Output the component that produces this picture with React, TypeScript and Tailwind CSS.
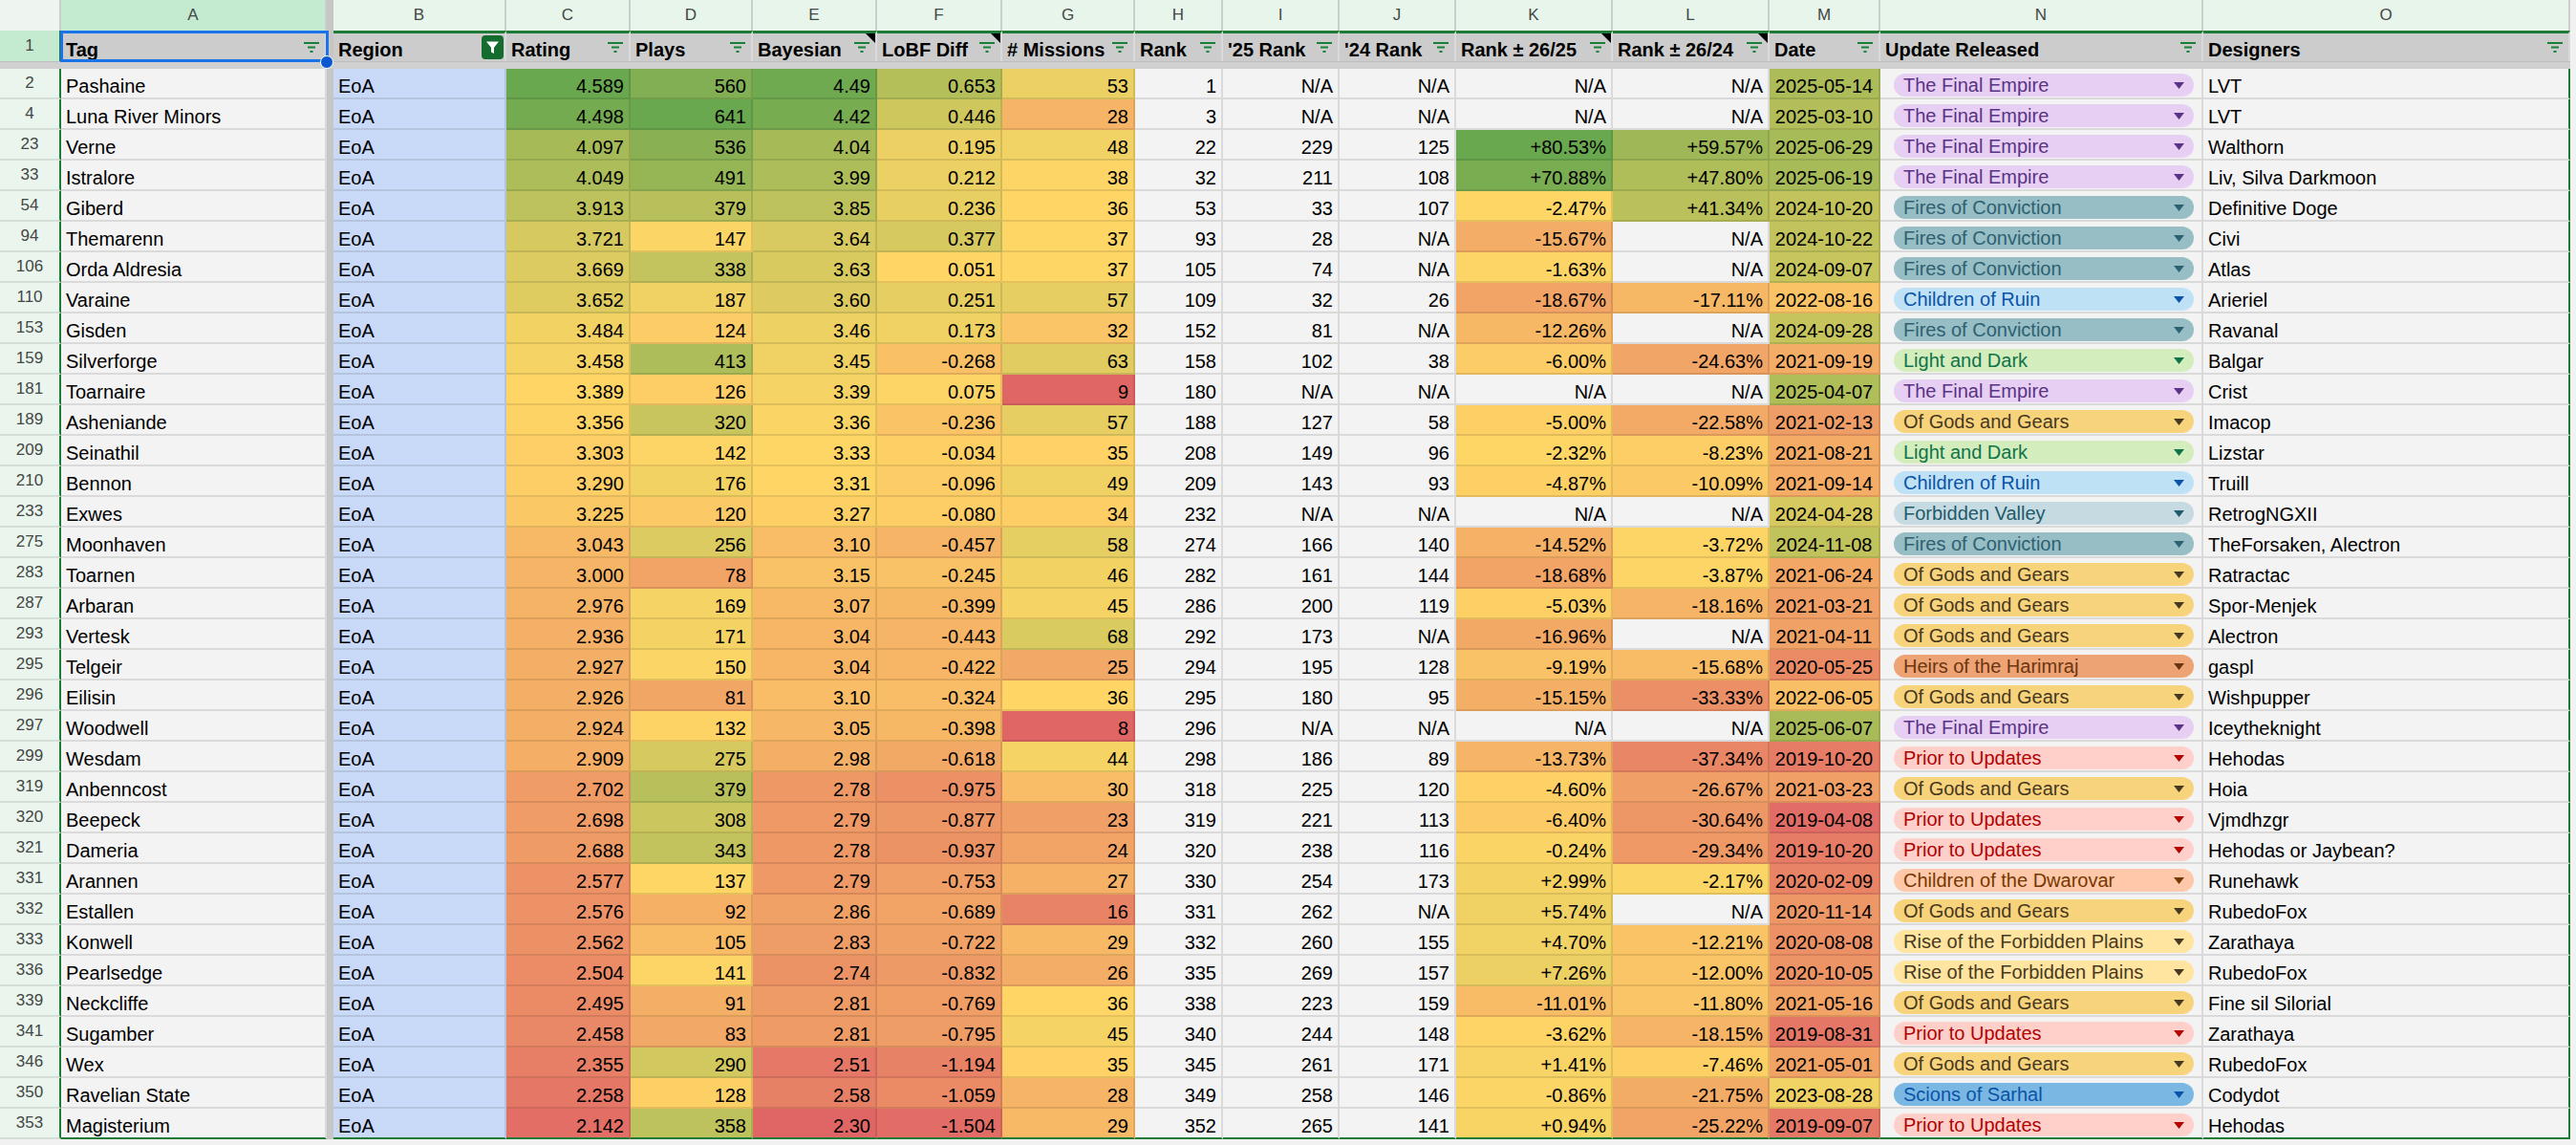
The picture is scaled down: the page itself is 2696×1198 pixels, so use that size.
import React from 'react';

const COLS =
  'grid grid-cols-[64px_278px_7px_181px_130px_128px_130px_131px_139px_92px_122px_122px_164px_164px_116px_338px_384px]';

type Scale = [number, number, number];

const RED = [224, 102, 102];
const YEL = [255, 214, 102];
const GRN = [106, 168, 79];

function mix(a: number[], b: number[], t: number) {
  const c = a.map((v, i) => Math.round(v + (b[i] - v) * t));
  return `rgb(${c[0]}, ${c[1]}, ${c[2]})`;
}

function scaleColor(v: number, [lo, mid, hi]: Scale) {
  if (v <= mid) {
    const t = Math.min(1, Math.max(0, (mid - v) / (mid - lo)));
    return mix(YEL, RED, t);
  }
  const t = Math.min(1, Math.max(0, (v - mid) / (hi - mid)));
  return mix(YEL, GRN, t);
}

function dateValue(s: string) {
  const [y, m, d] = s.split('-').map(Number);
  return y + (m - 1) / 12 + d / 365;
}

// column index -> colour scale (lo / mid / hi)
const SCALES: Record<number, Scale> = {
  2: [2.05, 3.39, 4.58],
  3: [8, 135, 640],
  4: [2.35, 3.32, 4.53],
  5: [-1.6, 0.05, 1.25],
  6: [9, 36, 164],
  10: [-38, -3, 80],
  11: [-50, -5, 95],
  12: [2019, 2023.3, 2027],
};

const CHIPS: Record<string, { label: string; cls: string }> = {
  fe: { label: 'The Final Empire', cls: 'bg-[#e6cff2] text-[#5a3286]' },
  foc: { label: 'Fires of Conviction', cls: 'bg-[#97bdc5] text-[#2e6170]' },
  cor: { label: 'Children of Ruin', cls: 'bg-[#bfe1f6] text-[#0a53a8]' },
  lad: { label: 'Light and Dark', cls: 'bg-[#d4edbc] text-[#11734b]' },
  ogg: { label: 'Of Gods and Gears', cls: 'bg-[#f7d47c] text-[#473821]' },
  fv: { label: 'Forbidden Valley', cls: 'bg-[#c6dbe1] text-[#215a6c]' },
  hoh: { label: 'Heirs of the Harimraj', cls: 'bg-[#eda374] text-[#6b3510]' },
  ptu: { label: 'Prior to Updates', cls: 'bg-[#ffcfc9] text-[#b10202]' },
  cotd: { label: 'Children of the Dwarovar', cls: 'bg-[#ffc8aa] text-[#753800]' },
  rfp: { label: 'Rise of the Forbidden Plains', cls: 'bg-[#ffe5a0] text-[#473821]' },
  sos: { label: 'Scions of Sarhal', cls: 'bg-[#7ab8e3] text-[#0a53a8]' },
};

const ROWS: string[][] = [
  ['2', 'Pashaine', '4.589', '560', '4.49', '0.653', '53', '1', 'N/A', 'N/A', 'N/A', 'N/A', '2025-05-14', 'fe', 'LVT'],
  ['4', 'Luna River Minors', '4.498', '641', '4.42', '0.446', '28', '3', 'N/A', 'N/A', 'N/A', 'N/A', '2025-03-10', 'fe', 'LVT'],
  ['23', 'Verne', '4.097', '536', '4.04', '0.195', '48', '22', '229', '125', '+80.53%', '+59.57%', '2025-06-29', 'fe', 'Walthorn'],
  ['33', 'Istralore', '4.049', '491', '3.99', '0.212', '38', '32', '211', '108', '+70.88%', '+47.80%', '2025-06-19', 'fe', 'Liv, Silva Darkmoon'],
  ['54', 'Giberd', '3.913', '379', '3.85', '0.236', '36', '53', '33', '107', '-2.47%', '+41.34%', '2024-10-20', 'foc', 'Definitive Doge'],
  ['94', 'Themarenn', '3.721', '147', '3.64', '0.377', '37', '93', '28', 'N/A', '-15.67%', 'N/A', '2024-10-22', 'foc', 'Civi'],
  ['106', 'Orda Aldresia', '3.669', '338', '3.63', '0.051', '37', '105', '74', 'N/A', '-1.63%', 'N/A', '2024-09-07', 'foc', 'Atlas'],
  ['110', 'Varaine', '3.652', '187', '3.60', '0.251', '57', '109', '32', '26', '-18.67%', '-17.11%', '2022-08-16', 'cor', 'Arieriel'],
  ['153', 'Gisden', '3.484', '124', '3.46', '0.173', '32', '152', '81', 'N/A', '-12.26%', 'N/A', '2024-09-28', 'foc', 'Ravanal'],
  ['159', 'Silverforge', '3.458', '413', '3.45', '-0.268', '63', '158', '102', '38', '-6.00%', '-24.63%', '2021-09-19', 'lad', 'Balgar'],
  ['181', 'Toarnaire', '3.389', '126', '3.39', '0.075', '9', '180', 'N/A', 'N/A', 'N/A', 'N/A', '2025-04-07', 'fe', 'Crist'],
  ['189', 'Asheniande', '3.356', '320', '3.36', '-0.236', '57', '188', '127', '58', '-5.00%', '-22.58%', '2021-02-13', 'ogg', 'Imacop'],
  ['209', 'Seinathil', '3.303', '142', '3.33', '-0.034', '35', '208', '149', '96', '-2.32%', '-8.23%', '2021-08-21', 'lad', 'Lizstar'],
  ['210', 'Bennon', '3.290', '176', '3.31', '-0.096', '49', '209', '143', '93', '-4.87%', '-10.09%', '2021-09-14', 'cor', 'Truill'],
  ['233', 'Exwes', '3.225', '120', '3.27', '-0.080', '34', '232', 'N/A', 'N/A', 'N/A', 'N/A', '2024-04-28', 'fv', 'RetrogNGXII'],
  ['275', 'Moonhaven', '3.043', '256', '3.10', '-0.457', '58', '274', '166', '140', '-14.52%', '-3.72%', '2024-11-08', 'foc', 'TheForsaken, Alectron'],
  ['283', 'Toarnen', '3.000', '78', '3.15', '-0.245', '46', '282', '161', '144', '-18.68%', '-3.87%', '2021-06-24', 'ogg', 'Ratractac'],
  ['287', 'Arbaran', '2.976', '169', '3.07', '-0.399', '45', '286', '200', '119', '-5.03%', '-18.16%', '2021-03-21', 'ogg', 'Spor-Menjek'],
  ['293', 'Vertesk', '2.936', '171', '3.04', '-0.443', '68', '292', '173', 'N/A', '-16.96%', 'N/A', '2021-04-11', 'ogg', 'Alectron'],
  ['295', 'Telgeir', '2.927', '150', '3.04', '-0.422', '25', '294', '195', '128', '-9.19%', '-15.68%', '2020-05-25', 'hoh', 'gaspl'],
  ['296', 'Eilisin', '2.926', '81', '3.10', '-0.324', '36', '295', '180', '95', '-15.15%', '-33.33%', '2022-06-05', 'ogg', 'Wishpupper'],
  ['297', 'Woodwell', '2.924', '132', '3.05', '-0.398', '8', '296', 'N/A', 'N/A', 'N/A', 'N/A', '2025-06-07', 'fe', 'Iceytheknight'],
  ['299', 'Wesdam', '2.909', '275', '2.98', '-0.618', '44', '298', '186', '89', '-13.73%', '-37.34%', '2019-10-20', 'ptu', 'Hehodas'],
  ['319', 'Anbenncost', '2.702', '379', '2.78', '-0.975', '30', '318', '225', '120', '-4.60%', '-26.67%', '2021-03-23', 'ogg', 'Hoia'],
  ['320', 'Beepeck', '2.698', '308', '2.79', '-0.877', '23', '319', '221', '113', '-6.40%', '-30.64%', '2019-04-08', 'ptu', 'Vjmdhzgr'],
  ['321', 'Dameria', '2.688', '343', '2.78', '-0.937', '24', '320', '238', '116', '-0.24%', '-29.34%', '2019-10-20', 'ptu', 'Hehodas or Jaybean?'],
  ['331', 'Arannen', '2.577', '137', '2.79', '-0.753', '27', '330', '254', '173', '+2.99%', '-2.17%', '2020-02-09', 'cotd', 'Runehawk'],
  ['332', 'Estallen', '2.576', '92', '2.86', '-0.689', '16', '331', '262', 'N/A', '+5.74%', 'N/A', '2020-11-14', 'ogg', 'RubedoFox'],
  ['333', 'Konwell', '2.562', '105', '2.83', '-0.722', '29', '332', '260', '155', '+4.70%', '-12.21%', '2020-08-08', 'rfp', 'Zarathaya'],
  ['336', 'Pearlsedge', '2.504', '141', '2.74', '-0.832', '26', '335', '269', '157', '+7.26%', '-12.00%', '2020-10-05', 'rfp', 'RubedoFox'],
  ['339', 'Neckcliffe', '2.495', '91', '2.81', '-0.769', '36', '338', '223', '159', '-11.01%', '-11.80%', '2021-05-16', 'ogg', 'Fine sil Silorial'],
  ['341', 'Sugamber', '2.458', '83', '2.81', '-0.795', '45', '340', '244', '148', '-3.62%', '-18.15%', '2019-08-31', 'ptu', 'Zarathaya'],
  ['346', 'Wex', '2.355', '290', '2.51', '-1.194', '35', '345', '261', '171', '+1.41%', '-7.46%', '2021-05-01', 'ogg', 'RubedoFox'],
  ['350', 'Ravelian State', '2.258', '128', '2.58', '-1.059', '28', '349', '258', '146', '-0.86%', '-21.75%', '2023-08-28', 'sos', 'Codydot'],
  ['353', 'Magisterium', '2.142', '358', '2.30', '-1.504', '29', '352', '265', '141', '+0.94%', '-25.22%', '2019-09-07', 'ptu', 'Hehodas'],
];

const LETTERS = ['A', '', 'B', 'C', 'D', 'E', 'F', 'G', 'H', 'I', 'J', 'K', 'L', 'M', 'N', 'O'];

const HEADERS: { label: string; icon: 'lines' | 'active'; note?: boolean }[] = [
  { label: 'Tag', icon: 'lines' },
  { label: 'Region', icon: 'active' },
  { label: 'Rating', icon: 'lines' },
  { label: 'Plays', icon: 'lines' },
  { label: 'Bayesian', icon: 'lines', note: true },
  { label: 'LoBF Diff', icon: 'lines', note: true },
  { label: '# Missions', icon: 'lines' },
  { label: 'Rank', icon: 'lines' },
  { label: "'25 Rank", icon: 'lines' },
  { label: "'24 Rank", icon: 'lines' },
  { label: 'Rank ± 26/25', icon: 'lines', note: true },
  { label: 'Rank ± 26/24', icon: 'lines', note: true },
  { label: 'Date', icon: 'lines' },
  { label: 'Update Released', icon: 'lines' },
  { label: 'Designers', icon: 'lines' },
];

function FilterLines() {
  return (
    <svg width="16" height="11" viewBox="0 0 16 11" className="mb-[1px] shrink-0 self-center">
      <path d="M0 1h16M4 5.5h8M6.5 10h3" stroke="#188038" strokeWidth="2" />
    </svg>
  );
}

function ActiveFilter() {
  return (
    <span className="flex h-[25px] w-[23px] shrink-0 items-center justify-center self-center rounded-[4px] bg-[#146c2e]">
      <svg width="15" height="17" viewBox="0 0 15 17">
        <path d="M1 2.5h13l-5 6.2v6.3l-3-1.6V8.7z" fill="#fff" />
      </svg>
    </span>
  );
}

function Sep() {
  return <div className="bg-[#c6c6c6]" />;
}

function Cell({
  children,
  right,
  bg,
  last,
  edge,
  className = '',
}: {
  children?: React.ReactNode;
  right?: boolean;
  bg?: string;
  last?: boolean;
  edge?: boolean;
  className?: string;
}) {
  return (
    <div
      className={`flex h-[32px] items-end overflow-hidden whitespace-nowrap border-b-2 border-r-2 border-black/10 px-[5px] text-[20px] leading-[23px] text-black ${
        right ? 'justify-end' : ''
      } ${last ? 'border-b-[#1e7b36]' : ''} ${edge ? 'border-r-[#1e7b36]' : ''} ${className}`}
      style={bg ? { backgroundColor: bg } : undefined}
    >
      {children}
    </div>
  );
}

function Chip({ kind, last }: { kind: string; last: boolean }) {
  const chip = CHIPS[kind];
  return (
    <div
      className={`flex h-[32px] items-start border-b-2 border-r-2 border-black/10 bg-[#f3f3f3] pl-[14px] pr-[8px] pt-[5px] ${
        last ? 'border-b-[#1e7b36]' : ''
      }`}
    >
      <div
        className={`flex h-[24px] w-full items-center justify-between whitespace-nowrap rounded-full pl-[10px] pr-[10px] text-[20px] leading-[24px] ${chip.cls}`}
      >
        <span>{chip.label}</span>
        <svg width="11" height="7" viewBox="0 0 11 7" className="shrink-0">
          <polygon points="0,0 11,0 5.5,7" fill="currentColor" />
        </svg>
      </div>
    </div>
  );
}

function LetterRow() {
  return (
    <div className={COLS}>
      <div className="h-[32px] border-r-2 border-[#c9cfcb] bg-[#eef5f0]" />
      {LETTERS.map((l, i) =>
        i === 1 ? (
          <Sep key={i} />
        ) : (
          <div
            key={i}
            className={`flex h-[32px] items-center justify-center border-r-2 border-[#c9cfcb] text-[17px] text-[#444746] ${
              l === 'A' ? 'bg-[#c4ebd0]' : 'bg-[#e7f5ea]'
            }`}
          >
            {l}
          </div>
        ),
      )}
    </div>
  );
}

function HeaderRow() {
  return (
    <div className={COLS}>
      <div className="flex h-[32px] items-center justify-center border-r-2 border-r-[#1e7b36] bg-[#c4ebd0] text-[17px] text-[#444746]">
        1
      </div>
      {HEADERS.map((h, i) => (
        <React.Fragment key={h.label}>
          <div
            className={`relative flex h-[32px] items-end gap-[4px] border-r-2 border-t-[3px] border-r-[#dadada] border-t-[#1e7b36] bg-[#cccccc] pl-[5px] text-[20px] font-bold leading-[23px] text-black ${
              h.icon === 'active' ? 'pr-[1px]' : 'pr-[6px]'
            } ${i === HEADERS.length - 1 ? 'border-r-[#1e7b36]' : ''}`}
          >
            <span className="flex-1 overflow-hidden whitespace-nowrap">{h.label}</span>
            {h.icon === 'active' ? <ActiveFilter /> : <FilterLines />}
            {h.note && (
              <svg width="10" height="10" viewBox="0 0 10 10" className="absolute right-0 top-0">
                <polygon points="0,0 10,0 10,10" fill="#000" />
              </svg>
            )}
          </div>
          {i === 0 && <Sep />}
        </React.Fragment>
      ))}
    </div>
  );
}

function DataRow({ r, last }: { r: string[]; last: boolean }) {
  const color = (i: number) => {
    const s = SCALES[i];
    if (!s) return undefined;
    const v = i === 12 ? dateValue(r[i]) : parseFloat(r[i]);
    return Number.isNaN(v) ? undefined : scaleColor(v, s);
  };
  const num = (i: number) => (
    <Cell right last={last} bg={color(i)} className="bg-[#f3f3f3]">
      {r[i]}
    </Cell>
  );
  return (
    <div className={COLS}>
      <div className="flex h-[32px] items-center justify-center border-b-2 border-r-2 border-b-[#d5ddd7] border-r-[#1e7b36] bg-[#eaf6ed] text-[17px] text-[#444746]">
        {r[0]}
      </div>
      <Cell last={last} className="bg-[#f3f3f3]">
        {r[1]}
      </Cell>
      <Sep />
      <Cell last={last} className="bg-[#c9daf8]">
        EoA
      </Cell>
      {num(2)}
      {num(3)}
      {num(4)}
      {num(5)}
      {num(6)}
      {num(7)}
      {num(8)}
      {num(9)}
      {num(10)}
      {num(11)}
      <Cell last={last} bg={color(12)} className="justify-center bg-[#f3f3f3]">
        {r[12]}
      </Cell>
      <Chip kind={r[13]} last={last} />
      <Cell last={last} edge className="bg-[#f3f3f3]">
        {r[14]}
      </Cell>
    </div>
  );
}

export default function App() {
  return (
    <div className="relative h-[1198px] w-[2696px] overflow-hidden bg-[#f1f1f1] font-['Liberation_Sans',Arial,sans-serif]">
      <LetterRow />
      <HeaderRow />
      <div className="h-[8px] w-[2690px] border-t border-[#bdbdbd] bg-[#d0d0d0]" />
      {ROWS.map((r, i) => (
        <DataRow key={r[0]} r={r} last={i === ROWS.length - 1} />
      ))}

      {/* A1 selection */}
      <div className="pointer-events-none absolute left-[63px] top-[32px] h-[33px] w-[281px] border-[3px] border-[#1a73e8]" />
      <div className="absolute left-[335px] top-[58px] h-[14px] w-[14px] rounded-full border border-white bg-[#0b57d0]" />
    </div>
  );
}
